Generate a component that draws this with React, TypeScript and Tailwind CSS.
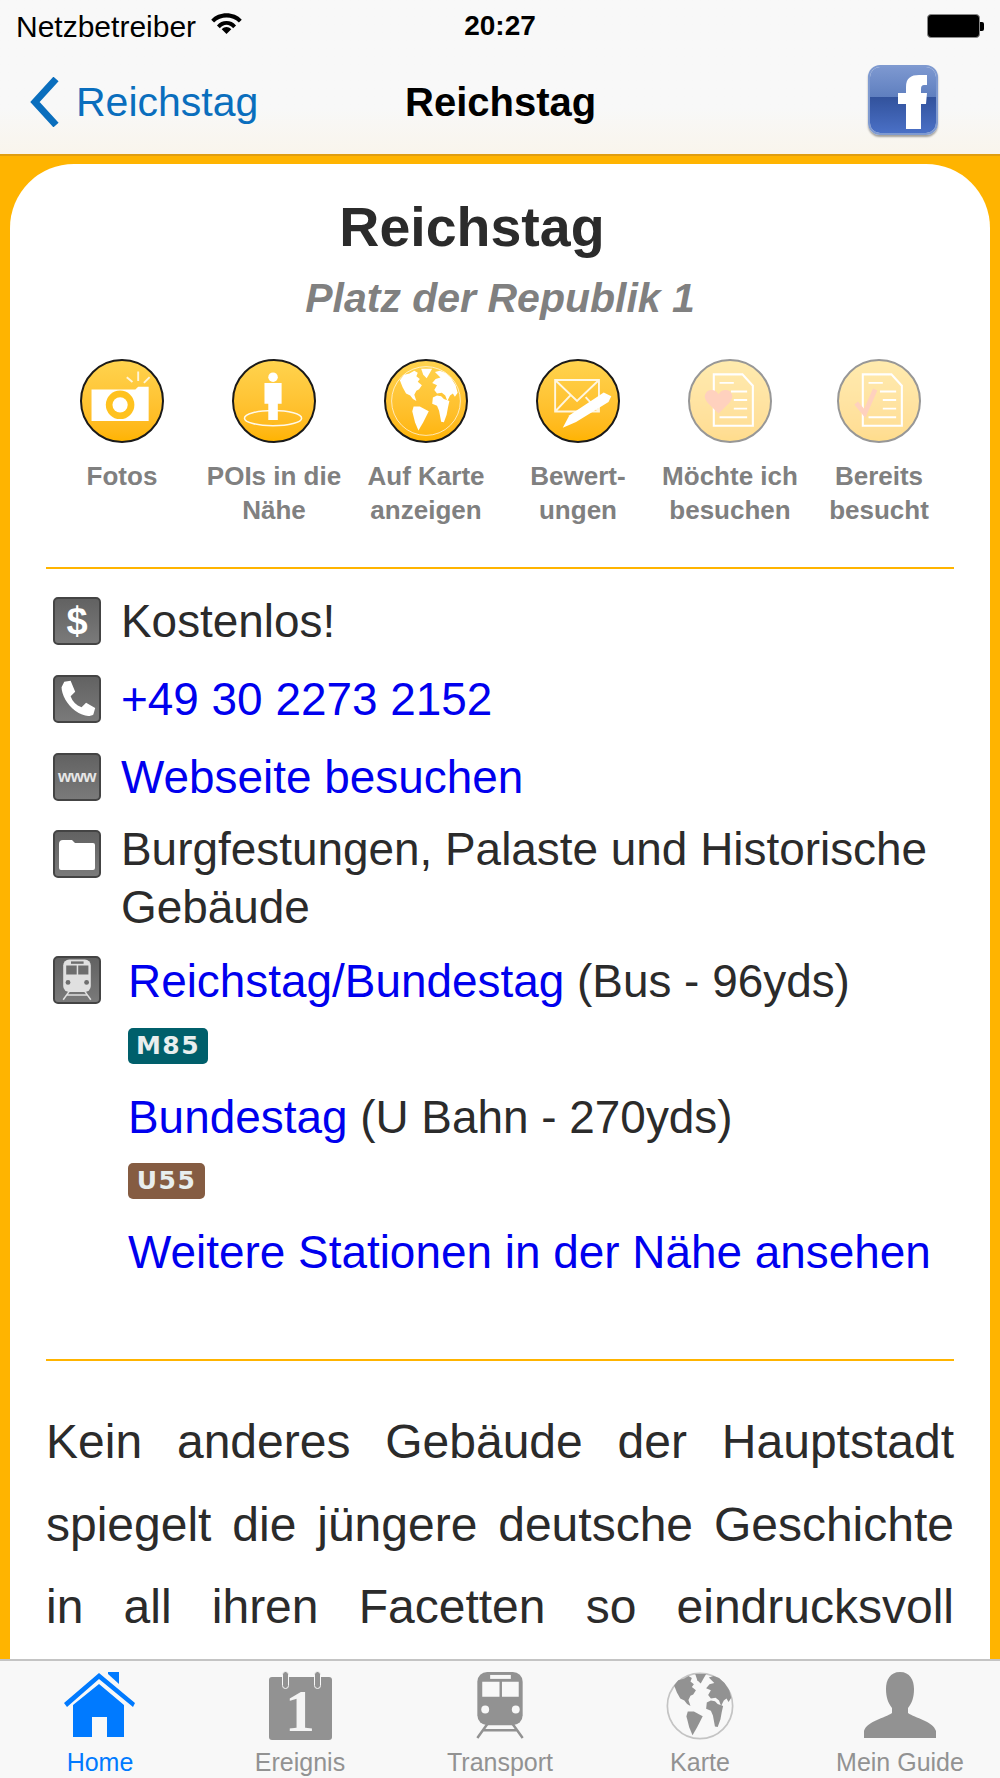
import type { ReactNode } from 'react'

const sans = 'font-["Liberation_Sans",Arial,sans-serif]'

function Continents({ fill }: { fill: string }) {
  return (
    <g fill={fill}>
      <path d="M12 20 L18 12 L26 10 L33 6 L38 9 L36 14 L41 18 L38 22 L44 27 L40 33 L36 35 L33 41 L36 50 L31 47 L27 42 L21 39 L16 30 Z" />
      <path d="M43 3 L59 3 L51 17 L46 12 Z" />
      <path d="M32 58 L41 58 L54 65 L46 81 L39 93 L34 81 L30 65 Z" />
      <path d="M63 8 L70 6 L78 9 L86 16 L93 27 L96 38 L92 44 L89 39 L85 42 L81 50 L78 42 L73 38 L66 39 L62 34 L66 27 L59 24 L64 18 L71 16 Z" />
      <path d="M60 45 L66 42 L72 43 L76 47 L84 50 L82 59 L80 70 L76 81 L72 80 L69 64 L66 57 L59 54 Z" />
    </g>
  )
}

function CameraGlyph() {
  return (
    <svg viewBox="0 0 84 84" className="w-full h-full">
      <path d="M10 30 H56 L59 27 H70 V63 H10 Z" fill="#fff" />
      <circle cx="40" cy="46" r="15" fill="#ffc21f" />
      <circle cx="40" cy="46" r="8" fill="#fff" />
      <path d="M47 17 L53 22 M59 11 V21 M71 17 L65 23" stroke="#fff" strokeWidth="2" opacity="0.8" />
    </svg>
  )
}

function PersonGlyph() {
  return (
    <svg viewBox="0 0 84 84" className="w-full h-full">
      <circle cx="41" cy="17" r="5" fill="#fff" />
      <path d="M32 23 H50 V45 H46 V62 H36 V45 H32 Z" fill="#fff" />
      <ellipse cx="41" cy="60" rx="30" ry="8" fill="none" stroke="#fff" strokeWidth="1.6" opacity="0.9" />
    </svg>
  )
}

function GlobeGlyph() {
  return (
    <svg viewBox="0 0 100 100" className="w-full h-full">
      <circle cx="50" cy="50" r="43" fill="none" stroke="#fff" strokeWidth="1.2" opacity="0.7" />
      <g transform="translate(7 7) scale(0.86)">
        <Continents fill="#fff" />
      </g>
    </svg>
  )
}

function MailGlyph() {
  return (
    <svg viewBox="0 0 84 84" className="w-full h-full">
      <path d="M18 20 H64 V53 H18 Z M18 20 L41 42 L64 20 M18 53 L34 36 M64 53 L50 38" fill="none" stroke="#fff" strokeWidth="2" opacity="0.85" />
      <path d="M26 70 L33 57 L69 33 L77 37 L74 43 L40 64 Z" fill="#fff" />
    </svg>
  )
}

function DocGlyph({ mark }: { mark: 'heart' | 'check' }) {
  return (
    <svg viewBox="0 0 84 84" className="w-full h-full">
      <path d="M25 14 H55 L66 26 V68 H25 Z" fill="none" stroke="#fff" strokeWidth="2.2" />
      <path d="M31 23 H46 M43 32 H60 M46 41 H60 M46 50 H60 M31 59 H60" stroke="#fff" strokeWidth="2" />
      {mark === 'heart' ? (
        <path d="M30 55 C18 44 14 40 16 35 C18 29 27 29 30 35 C33 29 42 29 44 35 C46 40 42 44 30 55 Z" fill="#ff9a70" />
      ) : (
        <path d="M18 44 L27 55 L38 30" fill="none" stroke="#ff9a70" strokeWidth="5" />
      )}
    </svg>
  )
}

const actions: { lines: string[]; glyph: ReactNode; faded?: boolean; width: string }[] = [
  { lines: ['Fotos'], glyph: <CameraGlyph />, width: 'w-[152px]' },
  { lines: ['POIs in die', 'Nähe'], glyph: <PersonGlyph />, width: 'w-[152px]' },
  { lines: ['Auf Karte', 'anzeigen'], glyph: <GlobeGlyph />, width: 'w-[152px]' },
  { lines: ['Bewert-', 'ungen'], glyph: <MailGlyph />, width: 'w-[152px]' },
  { lines: ['Möchte ich', 'besuchen'], glyph: <DocGlyph mark="heart" />, faded: true, width: 'w-[152px]' },
  { lines: ['Bereits', 'besucht'], glyph: <DocGlyph mark="check" />, faded: true, width: 'w-[146px]' },
]

function Tile({ children }: { children: ReactNode }) {
  return (
    <div className="w-[48px] h-[48px] shrink-0 rounded-[5px] border-2 border-[#444] bg-linear-to-b from-[#626262] to-[#7a7a7a] flex items-center justify-center overflow-hidden text-white">
      {children}
    </div>
  )
}

function TrainGlyph({ color, cut }: { color: string; cut: string }) {
  return (
    <svg viewBox="0 0 48 70" className="w-full h-full">
      <rect x="1" y="1" width="46" height="54" rx="10" fill={color} />
      <rect x="14" y="4" width="21" height="4" fill={cut} />
      <path d="M6 11 H23.500 V26 H6 Z M26 11 H43 V26 H26 Z" fill={cut} />
      <circle cx="9" cy="39" r="4" fill={cut} />
      <circle cx="40" cy="39" r="4" fill={cut} />
      <path d="M11 54 L1 68 M37 54 L47 68 M7 60 H41" stroke={color} strokeWidth="2.500" fill="none" />
    </svg>
  )
}

function Badge({ label, bg, width }: { label: string; bg: string; width: string }) {
  return (
    <div className={`${bg} ${width} h-[36px] rounded-[5px] flex items-center justify-center text-[#e8eeee] text-[25px] font-bold tracking-[1.500px] font-["DejaVu_Sans",sans-serif]`}>
      {label}
    </div>
  )
}

function TabItem({ label, active, children }: { label: string; active?: boolean; children: ReactNode }) {
  return (
    <div className="flex-1 flex flex-col items-center">
      <div className="h-[69px] flex items-start justify-center">{children}</div>
      <span className={`mt-[7px] text-[25px] leading-[30px] ${active ? 'text-[#007aff]' : 'text-[#929292]'}`}>{label}</span>
    </div>
  )
}

export default function App() {
  return (
    <div className={`${sans} w-[1000px] h-[1778px] flex flex-col overflow-hidden bg-white`}>
      {/* status + nav bar */}
      <header className="h-[156px] shrink-0 bg-linear-to-b from-[#f8f8f8] from-70% to-[#f9f5ec] border-b-2 border-[#e09e10] flex flex-col">
        <div className="h-[52px] px-[16px] flex items-center text-black text-[30px]">
          <span className="w-[448px] flex items-center gap-[15px]">
            Netzbetreiber
            <svg viewBox="0 0 32 22" className="w-[31px] h-[21px] mb-[6px]">
              <path d="M0 7 C8 -2 24 -2 32 7 L29 10 C22 3 10 3 3 10 Z M6 13 C11 7 21 7 26 13 L23 16 C19 11 13 11 9 16 Z M16 22 L11 17 C14 14 18 14 21 17 Z" fill="#000" />
            </svg>
          </span>
          <span className="w-[72px] text-center text-[28px] font-bold">20:27</span>
          <div className="ml-auto flex items-center">
            <div className="w-[53px] h-[24px] rounded-[4px] bg-black border border-[#888]" />
            <div className="w-[4px] h-[9px] bg-black rounded-r-[2px]" />
          </div>
        </div>
        <div className="relative flex-1 flex items-start px-[30px]">
          <div className="flex items-center mt-[25px] text-[#0a6ebd]">
            <svg viewBox="0 0 30 50" className="w-[30px] h-[50px]">
              <path d="M26 2 L5 25 L26 48" fill="none" stroke="#0a6ebd" strokeWidth="7" />
            </svg>
            <span className="ml-[16px] text-[41px] leading-[50px]">Reichstag</span>
          </div>
          <span className="absolute left-[405px] top-[25px] text-[40px] leading-[50px] font-bold text-black">Reichstag</span>
          <div className="ml-auto mr-[32px] mt-[13px] w-[70px] h-[70px] rounded-[12px] border-2 border-[#7f9ad0] overflow-hidden relative shadow-[0_2px_2px_rgba(0,0,0,0.35)]">
            <div className="h-[30px] bg-linear-to-b from-[#7d98d0] to-[#5f7fbf]" />
            <div className="h-[36px] bg-linear-to-b from-[#32529c] to-[#4a70c6]" />
            <svg viewBox="0 0 66 66" className="absolute inset-0 w-full h-full">
              <path d="M36 62 V37 H28 V26 H36 V20 C36 11 41 8 49 8 H57 V18 H54 C52 18 51 19 51 22 V26 H57 L56 37 H51 V62 Z" fill="#fff" />
            </svg>
          </div>
        </div>
      </header>

      {/* orange frame + card */}
      <main className="flex-1 min-h-0 overflow-hidden bg-[#ffb400] pt-[8px] px-[10px]">
        <div className="bg-white rounded-t-[64px] h-[1600px] px-[36px] pt-[33px] text-[#2b2b2b]">
          <h1 className="text-[55.500px] leading-[60px] font-bold text-center pr-[56px]">Reichstag</h1>
          <p className="mt-[17px] text-[41px] leading-[48px] font-bold italic text-center text-[#808080]">Platz der Republik 1</p>

          <div className="flex mt-[37px]">
            {actions.map(a => (
              <div key={a.lines[0]} className={`${a.width} shrink-0 flex flex-col items-center`}>
                <div className={`w-[84px] h-[84px] rounded-full border-2 border-[#1a1a1a] bg-linear-to-b from-[#ffd34d] to-[#ffb400] overflow-hidden ${a.faded ? 'opacity-45' : ''}`}>
                  {a.glyph}
                </div>
                <div className="mt-[16px] text-[26px] leading-[34px] font-bold text-[#808080] text-center whitespace-nowrap">
                  {a.lines.map(l => <div key={l}>{l}</div>)}
                </div>
              </div>
            ))}
          </div>

          <hr className="mt-[40px] border-t-2 border-[#ffb400]" />

          <div className="mt-[13px] ml-[7px] text-[45.900px]">
            <div className="h-[78px] flex items-center gap-[20px]">
              <Tile><span className="text-[38px] font-bold leading-none">$</span></Tile>
              <span>Kostenlos!</span>
            </div>
            <div className="h-[78px] flex items-center gap-[20px]">
              <Tile>
                <svg viewBox="0 0 44 44" className="w-[40px] h-[40px]">
                  <path d="M8 3 L15 2 L20 14 L15 19 C17 25 21 29 27 31 L32 26 L42 32 L40 39 C36 42 28 41 20 35 C11 28 5 17 5 9 Z" fill="#fff" />
                </svg>
              </Tile>
              <span className="text-[#0000ee]">+49 30 2273 2152</span>
            </div>
            <div className="h-[78px] flex items-center gap-[20px]">
              <Tile><span className="text-[17px] font-bold text-[#e6e6e6] tracking-[-0.500px]">www</span></Tile>
              <span className="text-[#0000ee]">Webseite besuchen</span>
            </div>
            <div className="flex gap-[20px] leading-[58px] mt-[4px]">
              <div className="pt-[10px]">
                <Tile>
                  <svg viewBox="0 0 44 44" className="w-[44px] h-[44px]">
                    <path d="M4 12 Q4 8 8 8 H17 L20 11 H38 Q40 11 40 13 V36 Q40 38 38 38 H6 Q4 38 4 36 Z" fill="#fff" />
                  </svg>
                </Tile>
              </div>
              <span>Burgfestungen, Palaste und Historische Gebäude</span>
            </div>
            <div className="flex gap-[27px] mt-[16px] leading-[58px]">
              <div className="pt-[4px]">
                <Tile>
                  <div className="w-[32px] h-[42px]"><TrainGlyph color="#e0e0e0" cut="#6e6e6e" /></div>
                </Tile>
              </div>
              <div className="flex flex-col items-start whitespace-nowrap">
                <span><span className="text-[#0000ee]">Reichstag/Bundestag</span> (Bus - 96yds)</span>
                <div className="mt-[18px]"><Badge label="M85" bg="bg-[#005f6b]" width="w-[80px]" /></div>
                <span className="mt-[24px]"><span className="text-[#0000ee]">Bundestag</span> (U Bahn - 270yds)</span>
                <div className="mt-[17px]"><Badge label="U55" bg="bg-[#855c42]" width="w-[77px]" /></div>
                <span className="mt-[24px] text-[#0000ee]">Weitere Stationen in der Nähe ansehen</span>
              </div>
            </div>
          </div>

          <hr className="mt-[78px] border-t-2 border-[#ffb400]" />

          <p className="mt-[40px] text-[48px] leading-[82.500px] text-justify [text-align-last:justify]">
            Kein anderes Gebäude der Hauptstadt spiegelt die jüngere deutsche Geschichte in all ihren Facetten so eindrucksvoll
          </p>
        </div>
      </main>

      {/* tab bar */}
      <footer className="h-[119px] shrink-0 bg-[#f8f8f8] border-t-2 border-[#c4c4c4] pt-[10px] flex">
        <TabItem label="Home" active>
          <svg viewBox="0 0 72 66" className="w-[72px] h-[66px] mt-[1px]">
            <path d="M44 0 H55 V12 L44 2 Z" fill="#007aff" />
            <path d="M0 31 L35 1 L71 31 L69 35 L35 7 L3 35 Z" fill="#007aff" />
            <path d="M9 33 L35 12 L60 33 V65 H43 V45 H28 V65 H9 Z" fill="#007aff" />
          </svg>
        </TabItem>
        <TabItem label="Ereignis">
          <div className="relative w-[63px] h-[69px] flex items-end">
            <div className="w-[63px] h-[63px] rounded-[3px] bg-[#929292] flex items-center justify-center font-['Liberation_Serif',serif] font-bold text-[60px] leading-none text-[#f4f4f4] pt-[4px]">1</div>
            <div className="absolute left-[13px] top-0 w-[7px] h-[18px] rounded-full bg-[#929292] border border-[#f8f8f8]" />
            <div className="absolute left-[45px] top-0 w-[7px] h-[18px] rounded-full bg-[#929292] border border-[#f8f8f8]" />
          </div>
        </TabItem>
        <TabItem label="Transport">
          <div className="w-[48px] h-[69px]"><TrainGlyph color="#929292" cut="#f8f8f8" /></div>
        </TabItem>
        <TabItem label="Karte">
          <svg viewBox="0 0 100 100" className="w-[68px] h-[68px] mt-[1px]">
            <circle cx="50" cy="50" r="48" fill="none" stroke="#c4c4c4" strokeWidth="2.500" />
            <Continents fill="#929292" />
          </svg>
        </TabItem>
        <TabItem label="Mein Guide">
          <svg viewBox="0 0 74 66" className="w-[74px] h-[66px] mt-[1px]">
            <path d="M37 0 C47 0 51 8 51 17 C51 25 49 31 45 36 V41 C52 46 70 49 73 59 V66 H1 V59 C4 49 22 46 29 41 V36 C25 31 23 25 23 17 C23 8 27 0 37 0 Z" fill="#929292" />
          </svg>
        </TabItem>
      </footer>
    </div>
  )
}
